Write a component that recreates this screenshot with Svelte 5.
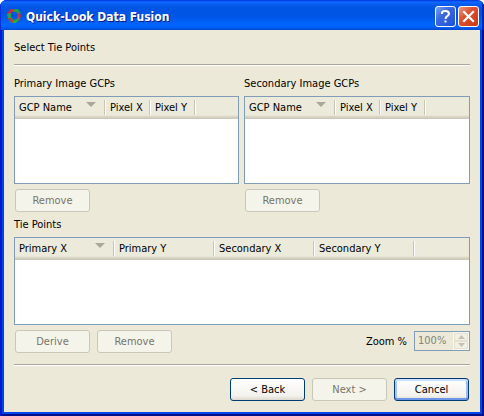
<script>
  const gcpColumns = [
    { label: 'GCP Name', width: 91, sorted: true },
    { label: 'Pixel X', width: 45 },
    { label: 'Pixel Y', width: 45 }
  ];
  const tieColumns = [
    { label: 'Primary X', width: 100, sorted: true },
    { label: 'Primary Y', width: 100 },
    { label: 'Secondary X', width: 100 },
    { label: 'Secondary Y', width: 100 }
  ];
  let zoom = $state('100%');
</script>

{#snippet list(id, columns)}
  <div class="list">
    <table aria-labelledby={id}>
      <colgroup>
        {#each columns as column}
          <col style="width: {column.width}px" />
        {/each}
        <col />
      </colgroup>
      <thead>
        <tr>
          {#each columns as column}
            <th scope="col" aria-sort={column.sorted ? 'descending' : undefined}>
              <div class="head">
                <span>{column.label}</span>
                {#if column.sorted}
                  <svg width="10" height="5" viewBox="0 0 10 5" aria-hidden="true">
                    <path d="M0 0H10L5 5Z" fill="#aca899" />
                  </svg>
                {/if}
              </div>
            </th>
          {/each}
          <td></td>
        </tr>
      </thead>
      <tbody></tbody>
    </table>
  </div>
{/snippet}

<div class="window">
  <header>
    <svg class="logo" width="16" height="16" viewBox="0 0 16 16" aria-hidden="true">
      <path d="M1 5L5 1L9 1L8 3L5 5L3 8Z" fill="#d0283c" />
      <path d="M8 1L12 1L15 5L12 7L10 4L7 4Z" fill="#1fa04a" />
      <path d="M12 4L15 7L14 12L10 14L11 9Z" fill="#b83a4a" />
      <path d="M14 10L10 15L6 15L4 12L8 12L11 11Z" fill="#19b53c" />
      <path d="M1 6L5 5L5 9L8 12L6 15L2 11Z" fill="#2fa048" />
      <path d="M2 10L5 10L8 13L6 15Z" fill="#c23a3a" />
    </svg>
    <h1>Quick-Look Data Fusion</h1>
    <button class="caption help" type="button" aria-label="Help">
      <svg width="19" height="19" viewBox="0 0 19 19" aria-hidden="true">
        <path d="M6 7V5.5Q6.5 4 9.5 4T13 6.5Q13 8 11 9.3Q9.5 10.2 9.5 12" fill="none" stroke="#fff" stroke-width="2" />
        <path d="M8.5 13.5h2v2h-2z" fill="#fff" />
      </svg>
    </button>
    <button class="caption close" type="button" aria-label="Close">
      <svg width="19" height="19" viewBox="0 0 19 19" aria-hidden="true">
        <path d="M5 5L14 14M14 5L5 14" fill="none" stroke="#fff" stroke-width="2.2" stroke-linecap="square" />
      </svg>
    </button>
  </header>

  <main>
    <h2>Select Tie Points</h2>
    <hr />
    <div class="pair">
      <section>
        <h3 id="primary">Primary Image GCPs</h3>
        {@render list('primary', gcpColumns)}
        <div class="actions"><button class="push" type="button" disabled>Remove</button></div>
      </section>
      <section>
        <h3 id="secondary">Secondary Image GCPs</h3>
        {@render list('secondary', gcpColumns)}
        <div class="actions"><button class="push" type="button" disabled>Remove</button></div>
      </section>
    </div>
    <section class="ties">
      <h3 id="ties">Tie Points</h3>
      {@render list('ties', tieColumns)}
      <div class="actions">
        <button class="push" type="button" disabled>Derive</button>
        <button class="push" type="button" disabled>Remove</button>
        <label for="zoom">Zoom %</label>
        <div class="spinner">
          <input id="zoom" type="text" bind:value={zoom} disabled />
          <div class="steps">
            <button type="button" disabled aria-label="Increase zoom">
              <svg width="7" height="4" viewBox="0 0 7 4" aria-hidden="true"><path d="M0 4L3.5 0L7 4Z" fill="#c4c1b0" /></svg>
            </button>
            <button type="button" disabled aria-label="Decrease zoom">
              <svg width="7" height="4" viewBox="0 0 7 4" aria-hidden="true"><path d="M0 0L3.5 4L7 0Z" fill="#c4c1b0" /></svg>
            </button>
          </div>
        </div>
      </div>
    </section>
    <hr />
    <footer>
      <button class="push" type="button">&lt; Back</button>
      <button class="push" type="button" disabled>Next &gt;</button>
      <button class="push default" type="button">Cancel</button>
    </footer>
  </main>
</div>

<style>
  .window {
    box-sizing: border-box;
    min-height: 100vh;
    display: flex;
    flex-direction: column;
    border-radius: 7px 7px 0 0;
    overflow: hidden;
    background: #0046e6;
    box-shadow: inset 2px 0 #0019cf, inset -2px -2px #00108c;
    font: 11px/14px "DejaVu Sans Condensed", "DejaVu Sans", sans-serif;
    color: #000;
  }

  header {
    box-sizing: border-box;
    height: 30px;
    display: flex;
    align-items: center;
    gap: 2px;
    padding: 2px 5px 0 6px;
    background: linear-gradient(#0831d9 0, #0a6cff 2px, #0a5cf0 4px, #0054e3 8px, #0055e5 16px, #0066ff 25px, #005bf0 28px, #0045c8 30px);
    box-shadow: inset 1px 0 #0831d9, inset -2px 0 #0024b8;
  }

  h1 {
    flex: 1;
    margin: 0 0 0 2px;
    padding-top: 1px;
    font: bold 12px/18px "DejaVu Sans Condensed", "DejaVu Sans", sans-serif;
    color: #fff;
    text-shadow: 1px 1px #0a1883;
    white-space: nowrap;
  }

  .caption {
    box-sizing: border-box;
    width: 21px;
    height: 21px;
    padding: 0;
    border: 1px solid #fff;
    border-radius: 3px;
  }

  .caption svg {
    display: block;
  }

  .help {
    background: linear-gradient(135deg, #7ba2f2, #3a68e0 40%, #1c50d8);
  }

  .close {
    background: linear-gradient(135deg, #eb9a80, #dc5030 40%, #c83a14);
  }

  main {
    flex: 1;
    display: flex;
    flex-direction: column;
    margin: 0 4px 4px;
    padding: 11px 10px 10px;
    background: #ece9d8;
  }

  h2,
  h3 {
    margin: 0;
    font: inherit;
  }

  h3 {
    padding-bottom: 5px;
  }

  hr {
    width: 100%;
    height: 1px;
    margin: 9px 0 0;
    border: 0;
    border-bottom: 1px solid #fff;
    background: #aca899;
  }

  .pair {
    display: grid;
    grid-template-columns: 225fr 226fr;
    gap: 5px;
    padding-top: 11px;
  }

  section {
    min-width: 0;
  }

  .ties {
    padding: 6px 0 2px;
  }

  .list {
    box-sizing: border-box;
    min-height: 88px;
    border: 1px solid #7f9db9;
    background: #fff;
  }

  table {
    width: 100%;
    table-layout: fixed;
    border-collapse: collapse;
  }

  thead tr {
    background: linear-gradient(#ebeadb 18px, #e2decd 19px, #d6d2c2 20px, #cbc7b8 22px);
  }

  th,
  td {
    height: 22px;
    padding: 0;
    font-weight: normal;
    text-align: left;
    vertical-align: top;
  }

  .head {
    display: flex;
    justify-content: space-between;
    height: 15px;
    margin-top: 3px;
    padding: 0 9px 0 4px;
    border-right: 1px solid #fff;
    box-shadow: inset -1px 0 #c7c5b2;
    white-space: nowrap;
  }

  .head span {
    padding-top: 1px;
  }

  .head svg {
    margin-top: 2px;
  }

  .actions,
  footer {
    display: flex;
    gap: 7px;
  }

  .actions {
    padding: 5px 0 0 1px;
  }

  footer {
    justify-content: flex-end;
    padding: 12px 1px 0 0;
  }

  .push {
    box-sizing: border-box;
    width: 75px;
    height: 23px;
    padding: 0;
    border: 1px solid #003c74;
    border-radius: 3px;
    background: linear-gradient(#fff, #f3f2ed 80%, #dcd8cc);
    font: inherit;
    color: #000;
  }

  .push.default {
    box-shadow: inset 0 2px #cee0ff, inset 0 -2px #6f95e8, inset 2px 0 #a9c3f5, inset -2px 0 #a0bcf2;
  }

  .push:disabled {
    border-color: #c9c7ba;
    background: #f5f4ea;
    color: #77756a;
  }

  label {
    margin-left: auto;
    padding-top: 5px;
  }

  .spinner {
    box-sizing: border-box;
    width: 56px;
    height: 20px;
    margin-top: 1px;
    display: flex;
    border: 1px solid #7f9db9;
  }

  input {
    flex: 1;
    min-width: 0;
    padding: 0 0 0 3px;
    border: 0;
    background: transparent;
    font: inherit;
    color: #858377;
  }

  .steps {
    display: flex;
    flex-direction: column;
    width: 16px;
    border: 1px solid #f8f7f0;
    box-sizing: border-box;
  }

  .steps button {
    flex: 1;
    min-height: 0;
    display: flex;
    align-items: center;
    justify-content: center;
    padding: 0;
    border: 1px solid #e4e1d2;
    border-radius: 2px;
    background: #f3f1e6;
  }
</style>
